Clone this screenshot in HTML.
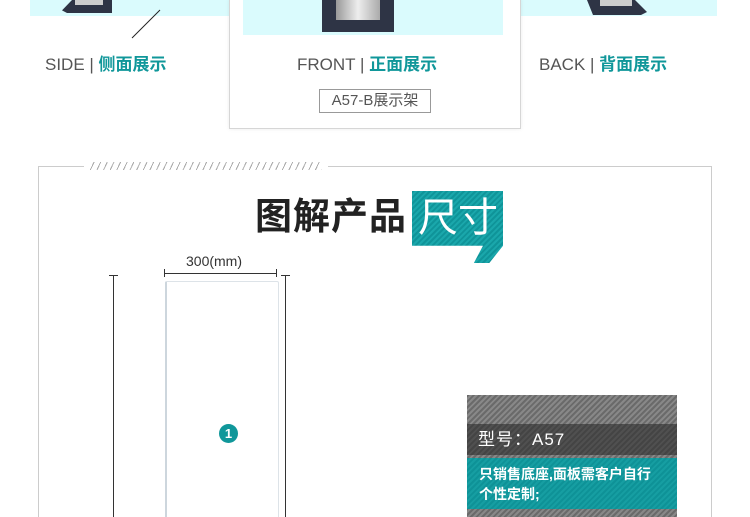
<!DOCTYPE html>
<html><head><meta charset="utf-8"><style>
html,body{margin:0;width:750px;height:517px;overflow:hidden}
body{background:#fff;position:relative;font-family:"Liberation Sans","Noto Sans CJK SC",sans-serif}
.a{position:absolute}
.cap{position:absolute;font-size:17px;color:#555;white-space:nowrap}
.cap b{color:#10979a;font-weight:bold}
.hatch{background:repeating-linear-gradient(135deg,#6a6a6a 0 2px,#888 2px 4px)}
</style></head><body>
<div class="a" style="left:30px;top:0;width:200px;height:16px;background:#dafbfd"></div>
<div class="a" style="left:518px;top:0;width:199px;height:16px;background:#dafbfd"></div>
<div class="a" style="left:62px;top:0;width:50px;height:13px;background:#2e3445;clip-path:polygon(0 80%,20% 0,100% 0,100% 100%,10% 100%)"></div>
<div class="a" style="left:75px;top:0;width:28px;height:5px;background:#ccc"></div>
<div class="a" style="left:587px;top:0;width:60px;height:15px;background:#2e3445;clip-path:polygon(0 0,80% 0,100% 80%,90% 100%,10% 100%)"></div>
<div class="a" style="left:600px;top:0;width:32px;height:6px;background:#ccc"></div>
<svg class="a" style="left:0;top:0" width="750" height="60"><line x1="160" y1="10" x2="132" y2="38" stroke="#222" stroke-width="1"/></svg>
<div class="a" style="left:229px;top:-1px;width:290px;height:128px;border:1px solid #d6d6d6;box-shadow:0 0 4px rgba(0,0,0,.08);background:#fff"></div>
<div class="a" style="left:243px;top:0;width:260px;height:35px;background:#dafbfd"></div>
<div class="a" style="left:322px;top:0;width:72px;height:32px;background:#2e3445"></div>
<div class="a" style="left:336px;top:0;width:44px;height:20px;background:linear-gradient(90deg,#999,#eee,#aaa)"></div>
<div class="cap" style="left:45px;top:50px">SIDE | <b>侧面展示</b></div>
<div class="cap" style="left:297px;top:50px">FRONT | <b>正面展示</b></div>
<div class="cap" style="left:539px;top:50px">BACK | <b>背面展示</b></div>
<div class="a" style="left:319px;top:89px;width:110px;height:22px;border:1px solid #999;font-size:15px;color:#555;line-height:22px;text-align:center">A57-B展示架</div>

<div class="a" style="left:38px;top:166px;width:672px;height:360px;border-left:1px solid #ccc;border-right:1px solid #ccc"></div>
<div class="a" style="left:38px;top:166px;width:46px;height:1px;background:#ccc"></div>
<div class="a" style="left:88px;top:162px;width:234px;height:8px;background:repeating-linear-gradient(115deg,transparent 0 5px,#aaa 5px 6px)"></div>
<div class="a" style="left:328px;top:166px;width:383px;height:1px;background:#ccc"></div>

<div class="a" style="left:255px;top:194px;font-size:37px;font-weight:bold;color:#222;letter-spacing:1px;line-height:46px">图解产品</div>
<div class="a" style="left:412px;top:191px;width:91px;height:72px;background:repeating-linear-gradient(135deg,#0f9499 0 2px,#1aa7ab 2px 4px);clip-path:polygon(0 0,100% 0,100% 76%,85% 100%,68% 100%,78% 76%,0 76%)"></div>
<div class="a" style="left:418px;top:193px;font-size:40px;color:#fff;line-height:50px">尺寸</div>

<div class="a" style="left:186px;top:253px;font-size:14px;color:#333">300(mm)</div>
<div class="a" style="left:164px;top:273px;width:113px;height:1px;background:#333"></div>
<div class="a" style="left:164px;top:269px;width:1px;height:8px;background:#333"></div>
<div class="a" style="left:276px;top:269px;width:1px;height:8px;background:#333"></div>
<div class="a" style="left:113px;top:275px;width:1px;height:245px;background:#333"></div>
<div class="a" style="left:109px;top:275px;width:9px;height:1px;background:#333"></div>
<div class="a" style="left:285px;top:275px;width:1px;height:245px;background:#333"></div>
<div class="a" style="left:281px;top:275px;width:9px;height:1px;background:#333"></div>
<div class="a" style="left:165px;top:281px;width:111px;height:240px;border:1px solid #dde3e8;border-left:2px solid #cdd6dd;border-radius:2px"></div>
<div class="a" style="left:219px;top:424px;width:19px;height:19px;border-radius:50%;background:#10979a;color:#fff;font-size:13px;font-weight:bold;text-align:center;line-height:19px">1</div>

<div class="a hatch" style="left:467px;top:395px;width:210px;height:122px"></div>
<div class="a" style="left:467px;top:424px;width:210px;height:31px;background:repeating-linear-gradient(135deg,#444 0 2px,#505050 2px 4px);color:#fff;font-size:17px;line-height:31px;padding-left:11px;box-sizing:border-box;letter-spacing:1px">型号：A57</div>
<div class="a" style="left:467px;top:458px;width:210px;height:51px;background:repeating-linear-gradient(135deg,#0e9297 0 2px,#169ea2 2px 4px);color:#fff;font-size:14px;font-weight:bold;line-height:20px;padding:6px 6px 0 12px;box-sizing:border-box">只销售底座,面板需客户自行<br>个性定制;</div>
</body></html>
